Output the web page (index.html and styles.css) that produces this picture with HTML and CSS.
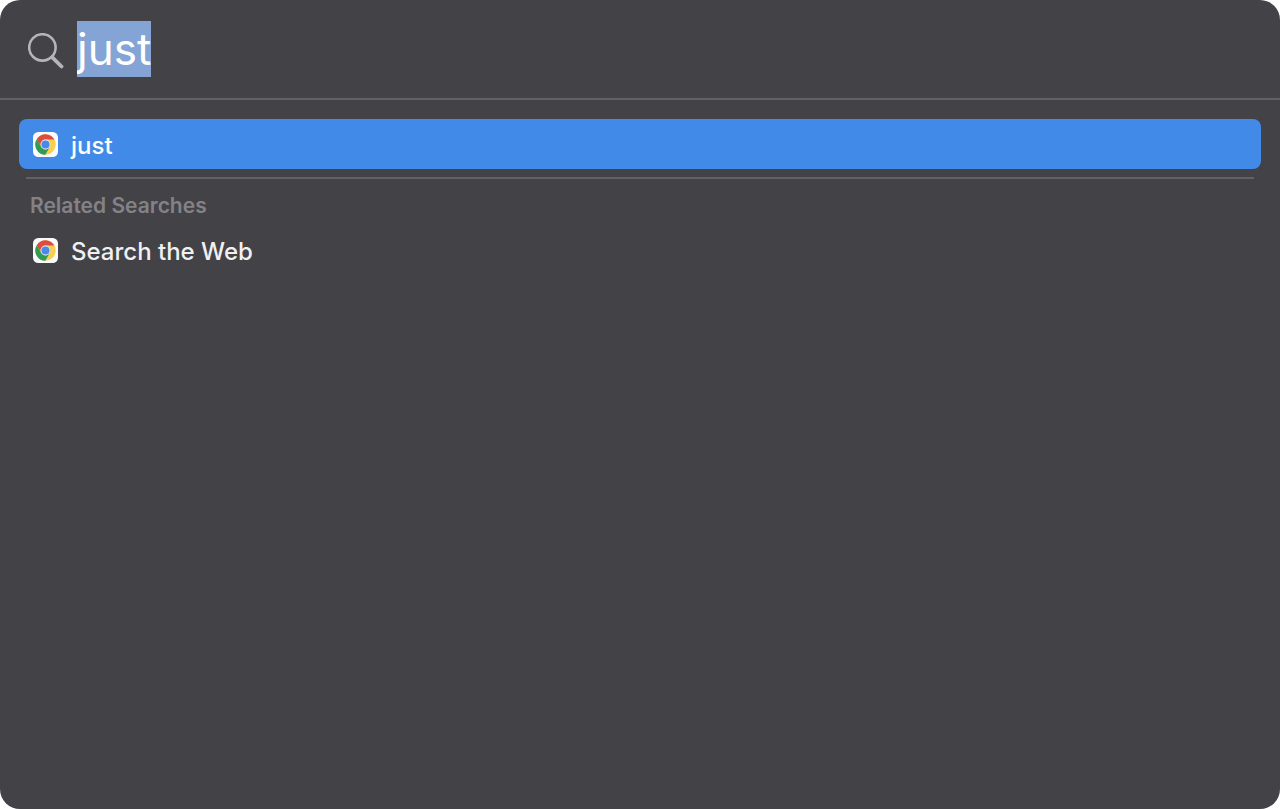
FILE: index.html
```html
<!DOCTYPE html>
<html lang="en">
<head>
<meta charset="utf-8">
<title>Search</title>
<link rel="stylesheet" href="styles.css">
</head>
<body>
<svg class="defs" aria-hidden="true">
  <symbol id="chrome" viewBox="0 0 26 26">
    <rect width="26" height="26" rx="5.5" fill="#fbfbfb"/>
    <circle cx="13" cy="13" r="10.6" fill="#f8cf50"/>
    <path d="M3.94 7.5A10.6 10.6 0 0 1 22.29 7.9H13A5.1 5.1 0 0 0 8.58 15.55Z" fill="#dc4c40"/>
    <path d="M3.94 7.5A10.6 10.6 0 0 0 12.77 23.6L17.42 15.55A5.1 5.1 0 0 1 8.58 15.55Z" fill="#2f9b55"/>
    <circle cx="13" cy="13" r="5.1" fill="#dfe8f5"/>
    <circle cx="13" cy="13" r="4.2" fill="#4a88ea"/>
  </symbol>
</svg>
<main class="panel">
  <form class="search" role="search">
    <label class="search-label" for="query" aria-label="Search">
      <svg class="search-icon" viewBox="0 0 36 36" fill="none" stroke="currentColor" aria-hidden="true">
        <circle cx="14.4" cy="14.4" r="13.2" stroke-width="2.6"/>
        <path d="M24.3 24.3L33.5 33.5" stroke-width="3.8" stroke-linecap="round"/>
      </svg>
    </label>
    <input class="search-input" id="query" type="text" value="just" autocomplete="off" spellcheck="false" autofocus>
  </form>
  <div class="results">
    <button class="result result-selected" type="button">
      <svg class="result-icon" aria-hidden="true"><use href="#chrome"/></svg>
      <span class="result-text">just</span>
    </button>
    <section class="group">
      <h2 class="group-title">Related Searches</h2>
      <button class="result" type="button">
        <svg class="result-icon" aria-hidden="true"><use href="#chrome"/></svg>
        <span class="result-text">Search the Web</span>
      </button>
    </section>
  </div>
</main>
<script src="main.js"></script>
</body>
</html>
```
FILE: styles.css
```css
* {
  box-sizing: border-box;
}

body {
  margin: 0;
  background: #fff;
  font-family: Inter, "Liberation Sans", sans-serif;
}

.defs {
  position: absolute;
  width: 0;
  height: 0;
}

.panel {
  min-height: 100vh;
  border-radius: 20px;
  background: #434247;
  color: #f0f0f2;
}

.search {
  display: flex;
  align-items: center;
  gap: 13px;
  padding: 21px 28px;
  border-bottom: 2px solid #626166;
}

.search-label {
  display: flex;
  padding-top: 4px;
  color: #b5b4b9;
}

.search-icon {
  width: 36px;
  height: 36px;
}

.search-input {
  flex: 1;
  min-width: 0;
  height: 56px;
  padding: 0;
  border: 0;
  outline: 0;
  background: transparent;
  color: #fff;
  caret-color: transparent;
  font: 400 44px/56px Inter, "Liberation Sans", sans-serif;
}

.search-input::selection {
  background: rgba(132, 165, 214, 0.996);
  color: #fff;
}

.results {
  padding: 19px;
}

.result {
  display: flex;
  align-items: center;
  gap: 13px;
  width: 100%;
  height: 50px;
  padding: 0 14px;
  border: 0;
  border-radius: 8px;
  background: transparent;
  color: inherit;
  font: 500 24px/30px Inter, "Liberation Sans", sans-serif;
  text-align: left;
}

.result-selected {
  background: #428ae7;
  color: #fff;
}

.result-icon {
  width: 25px;
  height: 25px;
}

.result-text {
  padding-top: 3px;
}

.group::before {
  content: "";
  display: block;
  height: 2px;
  margin: 8px 7px 0;
  background: #626166;
}

.group-title {
  margin: 0;
  padding: 13px 11px 5px;
  color: #838287;
  font-size: 21px;
  font-weight: 600;
  line-height: 28px;
}
```
FILE: main.js
```js
const query = document.getElementById("query");
query.focus();
query.select();
```
